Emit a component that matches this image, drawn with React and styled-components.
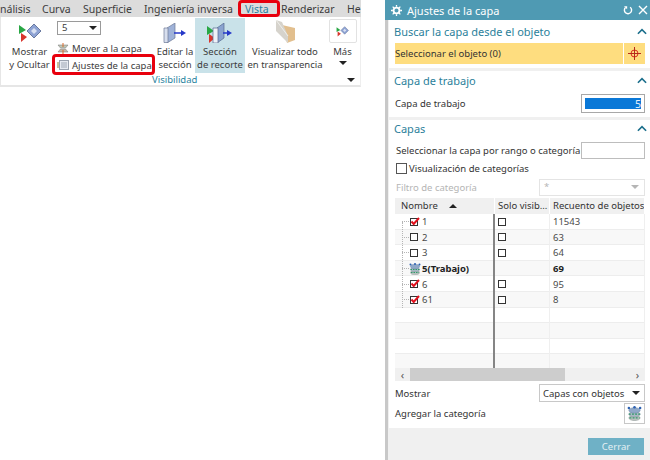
import React from "react"
import styled, { createGlobalStyle } from "styled-components"

const Global = createGlobalStyle`
  html, body { margin: 0; padding: 0; background: #fff; }
  * { box-sizing: border-box; }
  body { font-family: "Noto Sans", "Open Sans", sans-serif; font-size: 10px; color: #333; }
`

const Page = styled.div`
  width: 650px;
  height: 460px;
  display: flex;
  overflow: hidden;
  background: #fff;
`

const Left = styled.div`
  width: 385px;
  flex: none;
  padding-right: 24px;
`

const MenuBar = styled.div`
  height: 17px;
  background: #dcdcdc;
  display: flex;
  align-items: center;
  overflow: hidden;
  white-space: nowrap;
  font-size: 10.5px;
  color: #3c3c3c;
  position: relative;
`

const MenuItem = styled.span`
  flex: none;
  width: ${p => p.$w}px;
  color: ${p => p.$active ? "#2a7f9e" : "inherit"};
`

const RedBox = styled.span`
  position: absolute;
  border: 3px solid #e8000d;
  border-radius: 4px;
  pointer-events: none;
  left: ${p => p.$l}px;
  top: ${p => p.$t}px;
  width: ${p => p.$w}px;
  height: ${p => p.$h}px;
`

const Ribbon = styled.div`
  height: 70px;
  display: flex;
  padding: 1px 0 0 1px;
  border-bottom: 2px solid #e6e6e6;
  border-left: 1px solid #e6e6e6;
  border-right: 1px solid #eeeeee;
  position: relative;
`

const Tool = styled.div`
  width: ${p => p.$w}px;
  height: 55px;
  flex: none;
  display: flex;
  flex-direction: column;
  align-items: center;
  text-align: center;
  line-height: 13px;
  font-size: 9.5px;
  color: #3c3c3c;
  padding-top: ${p => p.$pt ?? 5}px;
  background: ${p => p.$on ? "#c9e2e9" : "transparent"};
  svg { flex: none; margin-bottom: 2px; }
`

const Middle = styled.div`
  width: 98px;
  flex: none;
  padding-top: 3px;
  display: flex;
  flex-direction: column;
  font-size: 9.5px;
  color: #3c3c3c;
  position: relative;
`

const LayerSelect = styled.div`
  width: 44px;
  height: 14px;
  border: 1px solid #9a9a9a;
  padding-left: 4px;
  line-height: 12px;
  display: flex;
  justify-content: space-between;
  align-items: center;
`

const Caret = styled.i`
  display: block;
  flex: none;
  width: 0;
  height: 0;
  border-left: 4px solid transparent;
  border-right: 4px solid transparent;
  border-top: 4px solid ${p => p.$c || "#222"};
  margin-right: ${p => p.$mr || 0}px;
  margin-top: ${p => p.$mt || 0}px;
`

const SmallRow = styled.div`
  display: flex;
  align-items: center;
  gap: 2px;
  height: 14px;
  margin-top: ${p => p.$mt || 0}px;
  white-space: nowrap;
`

const MoreBtn = styled.div`
  width: 28px;
  height: 24px;
  border: 1px solid #e2e2e2;
  border-radius: 2px;
  display: flex;
  align-items: center;
  justify-content: center;
  margin-bottom: 2px;
  svg { margin: 0; }
`

const GroupLabel = styled.div`
  position: absolute;
  left: 151px;
  bottom: -1px;
  font-size: 9.5px;
  line-height: 13px;
  color: #2a84a0;
`

const GroupCaret = styled.div`
  position: absolute;
  right: 5px;
  bottom: 3px;
`

const Panel = styled.div`
  width: 265px;
  flex: none;
  height: 460px;
  background: #f0f0f0;
  border-left: 3px solid #c8c8c8;
  display: flex;
  flex-direction: column;
`

const TitleBar = styled.div`
  height: 20px;
  flex: none;
  margin-left: -3px;
  background: #4f9ab3;
  color: #fff;
  font-size: 11px;
  display: flex;
  align-items: center;
  padding: 0 2px 0 6px;
  gap: 5px;
  span { flex: 1; }
`

const Card = styled.div`
  background: #fff;
  margin: 0 0 3px 1px;
  padding: 0 5px 0 6px;
  height: ${p => p.$h}px;
  flex: none;
`

const CardHead = styled.div`
  height: ${p => p.$h}px;
  margin: 0 -2px 0 -1px;
  display: flex;
  align-items: center;
  justify-content: space-between;
  font-size: 11px;
  color: #2b7f9b;
`

const FoundRow = styled.div`
  height: 21px;
  margin-top: 1px;
  display: flex;
  gap: 1px;
`

const FoundLabel = styled.div`
  flex: 1;
  background: #fedd7f;
  font-size: 9.5px;
  line-height: 21px;
  color: #333;
`

const FoundBtn = styled.div`
  width: 21px;
  background: #fedd7f;
  display: flex;
  align-items: center;
  justify-content: center;
`

const FieldRow = styled.div`
  display: flex;
  align-items: center;
  justify-content: space-between;
  font-size: 9.5px;
  color: #333;
  height: ${p => p.$h}px;
  margin-top: ${p => p.$mt || 0}px;
  padding-left: ${p => p.$pl || 0}px;
`

const NumberBox = styled.div`
  width: 64px;
  height: 19px;
  border: 1px solid #a8a8a8;
  padding: 3px;
  display: flex;
`

const NumberFill = styled.div`
  flex: 1;
  background: #0a78d7;
  color: #e8f2fb;
  text-align: right;
  font-size: 10.5px;
  line-height: 12px;
`

const RangeInput = styled.div`
  width: 64px;
  height: 17px;
  border: 1px solid #bdbdbd;
  flex: none;
`

const CheckRow = styled.div`
  display: flex;
  align-items: center;
  gap: 2px;
  height: 18px;
  font-size: 9.5px;
  color: #333;
  padding-left: 1px;
`

const BigBox = styled.i`
  width: 11px;
  height: 11px;
  border: 1px solid #555;
  display: block;
  flex: none;
`

const Muted = styled.span`
  color: #b5b5b5;
`

const DisabledSelect = styled.div`
  width: 106px;
  height: 17px;
  border: 1px solid #e4e4e4;
  color: #b5b5b5;
  display: flex;
  justify-content: space-between;
  padding: 0 5px 0 4px;
  line-height: 12px;
  align-items: center;
`

const Table = styled.div`
  margin-top: 1px;
`

const columns = "100px 55px 1fr"

const HeadRow = styled.div`
  display: grid;
  grid-template-columns: ${columns};
  height: 16px;
  background: #f0f0f0;
  font-size: 9.5px;
  color: #333;
  line-height: 16px;
  white-space: nowrap;
  overflow: hidden;
`

const HeadCell = styled.div`
  border-right: 1px solid #fff;
  padding-left: ${p => p.$pl}px;
  display: flex;
  align-items: center;
  gap: 11px;
  overflow: hidden;
`

const UpCaret = styled.i`
  display: block;
  width: 0;
  height: 0;
  border-left: 4px solid transparent;
  border-right: 4px solid transparent;
  border-bottom: 4px solid #222;
`

const Rows = styled.div`
  position: relative;
  height: 154px;
  overflow: hidden;
`

const TreeLine = styled.i`
  position: absolute;
  left: 7px;
  top: 8px;
  height: 86px;
  border-left: 1px dotted #b5b5b5;
`

const Row = styled.div`
  display: grid;
  grid-template-columns: ${columns};
  height: 15.6px;
  background: ${p => p.$alt ? "#f8f8f8" : "#fff"};
  box-shadow: inset 0 -1px 0 #ededed;
  font-size: 9.5px;
  line-height: 15px;
  color: ${p => p.$bold ? "#222" : "#4a4a4a"};
  font-weight: ${p => p.$bold ? 700 : 400};
`

const NameCell = styled.div`
  display: flex;
  align-items: center;
  padding-left: 7px;
  border-right: 2px solid #858585;
  svg { margin-right: 1px; }
`

const Stub = styled.i`
  width: 7px;
  border-top: 1px dotted #b5b5b5;
  display: block;
  flex: none;
`

const Cell = styled.div`
  padding-left: 3px;
  display: flex;
  align-items: center;
  border-right: 1px solid #efefef;
`

const TinyBox = styled.i`
  width: 8px;
  height: 8px;
  border: 1px solid #333;
  display: block;
  flex: none;
  margin-left: ${p => p.$ml || 0}px;
  margin-right: ${p => p.$mr || 0}px;
  position: relative;
  background: #fff;
`

const ScrollBar = styled.div`
  height: 13px;
  background: #f0f0f0;
  display: flex;
  align-items: center;
  color: #555;
  font-size: 11px;
`

const ScrollArrow = styled.span`
  width: 15px;
  flex: none;
  text-align: center;
  line-height: 12px;
  margin-left: ${p => p.$end ? "auto" : 0};
`

const Thumb = styled.div`
  width: 155px;
  height: 13px;
  flex: none;
  background: #cdcdcd;
`

const ShowSelect = styled.div`
  width: 106px;
  height: 18px;
  border: 1px solid #c8c8c8;
  display: flex;
  align-items: center;
  justify-content: space-between;
  padding: 0 4px 0 3px;
`

const AddBtn = styled.div`
  width: 21px;
  height: 21px;
  border: 1px solid #c8c8c8;
  display: flex;
  align-items: center;
  justify-content: center;
`

const Footer = styled.div`
  flex: 1;
  display: flex;
  justify-content: flex-end;
  align-items: flex-start;
  padding: 7px 6px 0 0;
`

const CloseBtn = styled.div`
  width: 56px;
  height: 17px;
  background: #6fb1c6;
  color: #e4f0f4;
  font-size: 9.5px;
  line-height: 17px;
  text-align: center;
`

const TallSvg = styled.svg`
  margin-top: -3px;
`

const ShowHideIcon = ({ w = 24, h = 20 }) => (
  <svg width={w} height={h} viewBox="0 0 24 20">
    <path d="M1 2l7 5-7 4z" fill="#29a745" />
    <path d="M3 10l6 4-6 5z" fill="#d8342c" />
    <path d="M9 8l7-7 7 7-7 7z" fill="#8ea3d4" stroke="#6a7aa0" />
    <path d="M13 8l3-3 3 3-3 3z" fill="#d9e1f2" />
  </svg>
)

const EditIcon = () => (
  <svg width="24" height="20" viewBox="0 0 24 20">
    <path d="M4 5l8-5v15l-8 5z" fill="#9fb2d8" stroke="#6d7a96" strokeWidth=".7" />
    <path d="M1 5h4v14.500H1z" fill="#d8dfee" stroke="#6d7a96" strokeWidth=".7" />
    <path d="M11 10h8" stroke="#2638c8" strokeWidth="1.5" />
    <path d="M18 7l5 3-5 3z" fill="#2638c8" />
  </svg>
)

const ClipIcon = () => (
  <svg width="26" height="20" viewBox="0 0 26 20">
    <path d="M0 3l7 5-7 4z" fill="#29a745" />
    <path d="M2 11l6 4-6 5z" fill="#d8342c" />
    <path d="M10 5l7-5v15l-7 5z" fill="#8aa3d0" stroke="#55688f" strokeWidth=".7" />
    <path d="M6 5h5v15H6z" fill="#eef2f8" stroke="#55688f" strokeWidth=".7" />
    <path d="M16 10h5" stroke="#2638c8" strokeWidth="1.5" />
    <path d="M20 7l5 3-5 3z" fill="#2638c8" />
  </svg>
)

const TransparentIcon = () => (
  <TallSvg width="21" height="23" viewBox="0 0 21 23">
    <path d="M7 5l13 3v12l-8 3z" fill="#e2bf8e" />
    <path d="M1 0l6 2 6 14v7L1 11z" fill="#d6d3cc" />
    <path d="M1 0l12 16" stroke="#eeeeea" />
  </TallSvg>
)

const MoveIcon = () => (
  <svg width="13" height="11" viewBox="0 0 13 11">
    <path d="M1 2h10L8.500 5h-5z" fill="#bfc7b8" stroke="#777" strokeWidth=".5" />
    <path d="M1 9h10L8.500 6h-5z" fill="#c8b9a8" stroke="#777" strokeWidth=".5" />
    <path d="M6 0v4M6 11V7" stroke="#d96a2a" />
  </svg>
)

const SettingsIcon = () => (
  <svg width="13" height="12" viewBox="0 0 13 12">
    <rect x="2.500" y="1.500" width="9" height="9" fill="#e6ebf2" stroke="#9aa3b0" />
    <path d="M4 4h6M4 6h6M4 8h6" stroke="#a0a9b6" />
    <path d="M1 3v6" stroke="#b8a878" strokeWidth="1.500" />
  </svg>
)

const Gear = () => (
  <svg width="11" height="11" viewBox="0 0 12 12">
    <circle cx="6" cy="6" r="3.200" fill="none" stroke="#fff" strokeWidth="2" />
    <path d="M6 0v2M6 10v2M0 6h2M10 6h2M1.800 1.800l1.400 1.400M8.800 8.800l1.400 1.400M1.800 10.200l1.400-1.400M8.800 3.200l1.400-1.400" stroke="#fff" strokeWidth="1.400" />
  </svg>
)

const Reset = () => (
  <svg width="10" height="10" viewBox="0 0 10 10">
    <path d="M2.500 2.500a3.600 3.600 0 1 0 4.600-.3" fill="none" stroke="#fff" strokeWidth="1.400" />
    <path d="M1 1.200l3.200.1-.1 3z" fill="#fff" />
  </svg>
)

const Close = () => (
  <svg width="10" height="10" viewBox="0 0 10 10">
    <path d="M1 1l8 8M9 1l-8 8" stroke="#fff" strokeWidth="1.400" />
  </svg>
)

const Chevron = () => (
  <svg width="10" height="7" viewBox="0 0 11 7">
    <path d="M1 6l4.500-4.500L10 6" fill="none" stroke="#1b6f8c" strokeWidth="1.800" />
  </svg>
)

const Crosshair = () => (
  <svg width="13" height="13" viewBox="0 0 13 13">
    <circle cx="6.500" cy="6.500" r="3.500" fill="none" stroke="#d92b1e" />
    <path d="M6.500 0v13M0 6.500h13" stroke="#b5291c" />
  </svg>
)

const CheckMark = () => (
  <svg width="10" height="9" viewBox="0 0 10 9" style={{ position: "absolute", left: -1, top: -2 }}>
    <path d="M1.500 4.500l2.200 2.500L9 1" fill="none" stroke="#e2101c" strokeWidth="2" />
  </svg>
)

const LayerIcon = ({ size = 12 }) => (
  <svg width={size} height={size} viewBox="0 0 12 12">
    <ellipse cx="6" cy="9.500" rx="4.500" ry="2.200" fill="#b9c1bf" stroke="#8c9694" strokeWidth=".4" />
    <ellipse cx="6" cy="6.500" rx="4.500" ry="2.200" fill="#a9b9c4" stroke="#7f8f9a" strokeWidth=".4" />
    <ellipse cx="6" cy="3.500" rx="4.500" ry="2.200" fill="#8fa8c8" stroke="#6b84a4" strokeWidth=".4" />
    <path d="M1.500 6.500h9M2 9.500h8" stroke="#2f9a6a" strokeDasharray="1.500 1" />
    <circle cx="1.500" cy="1.500" r="1" fill="#2a5fb0" />
    <circle cx="10.500" cy="1.500" r="1" fill="#2a5fb0" />
    <circle cx="6" cy="1" r="1" fill="#2a5fb0" />
  </svg>
)

const layers = [
  { name: "1", checked: true, visible: true, count: "11543" },
  { name: "2", checked: false, visible: true, count: "63" },
  { name: "3", checked: false, visible: true, count: "64" },
  { name: "5(Trabajo)", work: true, count: "69" },
  { name: "6", checked: true, visible: true, count: "95" },
  { name: "61", checked: true, visible: true, count: "8" },
  { name: "" }, { name: "" }, { name: "" }, { name: "" },
]

export default function App() {
  return (
    <Page>
      <Global />
      <Left>
        <MenuBar>
          <MenuItem $w={42}>nálisis</MenuItem>
          <MenuItem $w={41}>Curva</MenuItem>
          <MenuItem $w={61}>Superficie</MenuItem>
          <MenuItem $w={101}>Ingeniería inversa</MenuItem>
          <MenuItem $w={36} $active>Vista</MenuItem>
          <MenuItem $w={66}>Renderizar</MenuItem>
          <MenuItem $w={14}>He</MenuItem>
          <RedBox $l={238} $t={0} $w={42} $h={17} />
        </MenuBar>
        <Ribbon>
          <Tool $w={55}><ShowHideIcon /><span>Mostrar<br />y Ocultar</span></Tool>
          <Middle>
            <LayerSelect>5<Caret $mr={3} /></LayerSelect>
            <SmallRow $mt={6}><MoveIcon />Mover a la capa</SmallRow>
            <SmallRow $mt={3}><SettingsIcon />Ajustes de la capa</SmallRow>
            <RedBox $l={-5} $t={36} $w={103} $h={21} />
          </Middle>
          <Tool $w={40}><EditIcon /><span>Editar la<br />sección</span></Tool>
          <Tool $w={50} $on><ClipIcon /><span>Sección<br />de recorte</span></Tool>
          <Tool $w={80}><TransparentIcon /><span>Visualizar todo<br />en transparencia</span></Tool>
          <Tool $w={35} $pt={1}>
            <MoreBtn><ShowHideIcon w={13} h={11} /></MoreBtn>
            <span>Más</span>
            <Caret $mt={3} />
          </Tool>
          <GroupLabel>Visibilidad</GroupLabel>
          <GroupCaret><Caret /></GroupCaret>
        </Ribbon>
      </Left>
      <Panel>
        <TitleBar><Gear /><span>Ajustes de la capa</span><Reset /><Close /></TitleBar>
        <Card $h={48}>
          <CardHead $h={22}>Buscar la capa desde el objeto<Chevron /></CardHead>
          <FoundRow>
            <FoundLabel>Seleccionar el objeto (0)</FoundLabel>
            <FoundBtn><Crosshair /></FoundBtn>
          </FoundRow>
        </Card>
        <Card $h={46}>
          <CardHead $h={18}>Capa de trabajo<Chevron /></CardHead>
          <FieldRow $h={24} $mt={2}><span>Capa de trabajo</span><NumberBox><NumberFill>5</NumberFill></NumberBox></FieldRow>
        </Card>
        <Card $h={308}>
          <CardHead $h={16}>Capas<Chevron /></CardHead>
          <FieldRow $h={18} $mt={5} $pl={1}><span>Seleccionar la capa por rango o categoría</span><RangeInput /></FieldRow>
          <CheckRow><BigBox />Visualización de categorías</CheckRow>
          <FieldRow $pl={1} $h={20}>
            <Muted>Filtro de categoría</Muted>
            <DisabledSelect>*<Caret $c="#b5b5b5" /></DisabledSelect>
          </FieldRow>
          <Table>
            <HeadRow>
              <HeadCell $pl={6}>Nombre<UpCaret /></HeadCell>
              <HeadCell $pl={3}>Solo visib...</HeadCell>
              <HeadCell $pl={3}>Recuento de objetos</HeadCell>
            </HeadRow>
            <Rows>
              <TreeLine />
              {layers.map((l, i) => (
                <Row key={i} $alt={i % 2 === 1} $bold={l.work}>
                  <NameCell>
                    {l.name && <Stub />}
                    {l.name && (l.work ? <LayerIcon /> : <TinyBox $ml={1} $mr={4}>{l.checked && <CheckMark />}</TinyBox>)}
                    {l.name}
                  </NameCell>
                  <Cell>{l.visible && <TinyBox />}</Cell>
                  <Cell>{l.count}</Cell>
                </Row>
              ))}
            </Rows>
            <ScrollBar>
              <ScrollArrow>‹</ScrollArrow>
              <Thumb />
              <ScrollArrow $end>›</ScrollArrow>
            </ScrollBar>
          </Table>
          <FieldRow $h={18} $mt={3}><span>Mostrar</span><ShowSelect>Capas con objetos<Caret /></ShowSelect></FieldRow>
          <FieldRow $h={21} $mt={1}><span>Agregar la categoría</span><AddBtn><LayerIcon size={15} /></AddBtn></FieldRow>
        </Card>
        <Footer><CloseBtn>Cerrar</CloseBtn></Footer>
      </Panel>
    </Page>
  )
}
